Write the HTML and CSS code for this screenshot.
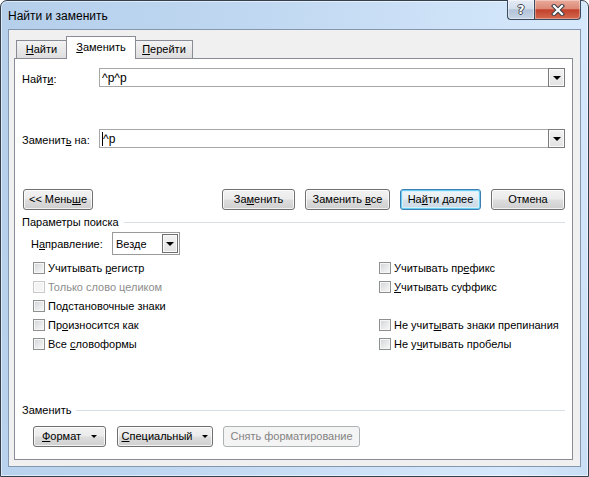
FILE: index.html
```html
<!DOCTYPE html>
<html lang="ru">
<head>
<meta charset="utf-8">
<title>Найти и заменить</title>
<link rel="stylesheet" href="styles.css">
</head>
<body>
<div class="window">
  <div class="titlebar">
    <span class="title">Найти и заменить</span>
    <div class="caption">
      <div class="cap help"><span class="qmark">?</span></div>
      <div class="cap close">
        <svg width="14" height="12" viewBox="0 0 14 12">
          <path d="M3 2 L11 10 M11 2 L3 10" stroke="#3a3f48" stroke-width="4.2" stroke-linecap="square"/>
          <path d="M3 2 L11 10 M11 2 L3 10" stroke="#ffffff" stroke-width="2.2" stroke-linecap="square"/>
        </svg>
      </div>
    </div>
  </div>
  <div class="client">
    <div class="tabs">
      <div class="tab t1"><span><u>Н</u>айти</span></div>
      <div class="tab t2 active"><span><u>З</u>аменить</span></div>
      <div class="tab t3"><span><u>П</u>ерейти</span></div>
    </div>
    <div class="pane">
      <div class="field-row">
        <span class="field-label">Найт<u>и</u>:</span>
        <div class="combo"><span class="combo-text">^p^p</span><span class="drop"><i class="tri"></i></span></div>
      </div>
      <div class="field-row replace-row">
        <span class="field-label">Заменит<u>ь</u> на:</span>
        <div class="combo"><span class="combo-text"><i class="caret"></i>^p</span><span class="drop"><i class="tri"></i></span></div>
      </div>
      <div class="btn-row">
        <div class="btn less"><span>&lt;&lt; Мень<u>ш</u>е</span></div>
        <div class="btn b-replace"><span>За<u>м</u>енить</span></div>
        <div class="btn b-all"><span>Заменить <u>в</u>се</span></div>
        <div class="btn b-next default"><span>На<u>й</u>ти далее</span></div>
        <div class="btn b-cancel"><span>Отмена</span></div>
      </div>
      <div class="group-head"><span>Параметры поиска</span><i class="rule"></i></div>
      <div class="dir-row">
        <span class="dir-label">Н<u>а</u>правление:</span>
        <div class="select"><span class="select-text">Везде</span><span class="drop sdrop"><i class="tri"></i></span></div>
      </div>
      <div class="checks">
        <div class="chk"><i class="box"></i><span>Учитывать <u>р</u>егистр</span></div>
        <div class="chk"><i class="box"></i><span>Учитывать пр<u>е</u>фикс</span></div>
        <div class="chk disabled"><i class="box"></i><span>Только слово целиком</span></div>
        <div class="chk"><i class="box"></i><span><u>У</u>читывать суффикс</span></div>
        <div class="chk"><i class="box"></i><span>Подстановочные знаки</span></div>
        <div class="chk empty"></div>
        <div class="chk"><i class="box"></i><span>Пр<u>о</u>износится как</span></div>
        <div class="chk"><i class="box"></i><span>Не учит<u>ы</u>вать знаки препинания</span></div>
        <div class="chk"><i class="box"></i><span>Все <u>с</u>ловоформы</span></div>
        <div class="chk"><i class="box"></i><span>Не у<u>ч</u>итывать пробелы</span></div>
      </div>
      <div class="group-head bottom-head"><span>Заменить</span><i class="rule"></i></div>
      <div class="bottom-row">
        <div class="btn b-format"><span><u>Ф</u>ормат</span><i class="tri"></i></div>
        <div class="btn b-special"><span><u>С</u>пециальный</span><i class="tri"></i></div>
        <div class="btn b-clear disabled"><span>Снять форматирование</span></div>
      </div>
    </div>
  </div>
</div>
</body>
</html>
```

FILE: styles.css
```css
* { box-sizing: border-box; }
html, body { margin: 0; padding: 0; }
body {
  width: 589px;
  height: 477px;
  overflow: hidden;
  background: #ffffff;
  font-family: "Liberation Sans", Arial, sans-serif;
  font-size: 11px;
  color: #000;
}
u { text-decoration: underline; text-underline-offset: 1px; }

.window {
  width: 589px;
  height: 477px;
  border: 1px solid #34404e;
  border-radius: 7px 7px 0 0;
  background: linear-gradient(100deg, #b5cfeb 0%, #c0d8f1 40%, #cfe3f8 70%, #d6e8fb 88%, #c9def4 100%);
  box-shadow: inset 0 0 0 1px rgba(255, 255, 255, 0.55);
  padding: 0 7px 9px 7px;
  display: flex;
  flex-direction: column;
}

.titlebar {
  height: 28px;
  flex: none;
  display: flex;
  justify-content: space-between;
  align-items: center;
}
.title { font-size: 12px; line-height: 16px; margin-top: 2px; }
.caption { display: flex; align-self: flex-start; height: 20px; margin-top: -1px; }
.cap {
  height: 20px;
  border: 1px solid #3b4a5e;
  border-top: none;
  display: flex;
  align-items: center;
  justify-content: center;
}
.cap.help {
  width: 27px;
  border-right: none;
  border-radius: 0 0 0 4px;
  background: linear-gradient(#e4ecf6 0%, #d3deeb 45%, #b3c4d9 52%, #c6d4e5 100%);
  box-shadow: inset 0 0 0 1px rgba(255, 255, 255, 0.45);
}
.cap.close {
  width: 47px;
  border-radius: 0 0 4px 0;
  background: linear-gradient(#eaa99a 0%, #dc8a77 45%, #c2412b 52%, #d4694f 100%);
  box-shadow: inset 0 0 0 1px rgba(255, 255, 255, 0.35);
}
.qmark {
  font-family: "DejaVu Sans", sans-serif;
  font-weight: bold;
  font-size: 12px;
  line-height: 12px;
  color: #fff;
  text-shadow: 1px 0 #3f4753, -1px 0 #3f4753, 0 1px #3f4753, 0 -1px #3f4753;
}

.client {
  flex: 1;
  border: 1px solid #8497af;
  background: #f0f0f0;
  padding: 6px 7px 6px 5px;
  display: flex;
  flex-direction: column;
}

.tabs {
  height: 22px;
  flex: none;
  display: flex;
  align-items: flex-end;
  padding-left: 2px;
}
.tab {
  height: 18px;
  border: 1px solid #898c95;
  border-bottom: none;
  background: linear-gradient(#f3f3f3, #e9e9e9 50%, #dedede);
  display: flex;
  align-items: center;
  justify-content: center;
  padding-bottom: 1px;
}
.t1 { width: 51px; }
.t2 { width: 70px; }
.t3 { width: 58px; }
.tab.active {
  height: 23px;
  margin: 0 -1px -1px -1px;
  background: #ffffff;
  position: relative;
  z-index: 1;
  padding-bottom: 2px;
}

.pane {
  flex: 1;
  border: 1px solid #898c95;
  background: #ffffff;
  padding: 9px 7px 0 7px;
  display: flex;
  flex-direction: column;
}

.field-row {
  height: 19px;
  flex: none;
  display: flex;
  align-items: center;
}
.replace-row { margin-top: 42px; }
.field-label { width: 77px; flex: none; padding-top: 2px; }
.combo {
  flex: 1;
  height: 19px;
  border: 1px solid #a7a7a7;
  display: flex;
  align-items: stretch;
}
.combo-text {
  flex: 1;
  padding-left: 2px;
  display: flex;
  align-items: center;
  font-size: 12px;
}
.caret {
  display: inline-block;
  width: 1px;
  height: 14px;
  background: #000;
}
.drop {
  width: 17px;
  margin: -1px -1px -1px 0;
  border: 1px solid #7b7b7b;
  background: linear-gradient(#f3f3f3, #e2e2e2);
  box-shadow: inset 0 0 0 1px #fafafa;
  display: flex;
  align-items: center;
  justify-content: center;
}
.tri {
  display: block;
  width: 0;
  height: 0;
  border-left: 4px solid transparent;
  border-right: 4px solid transparent;
  border-top: 4px solid #000;
  margin-top: 1px;
}

.btn-row {
  margin-top: 41px;
  height: 21px;
  flex: none;
  display: flex;
  gap: 10px;
}
.btn {
  height: 21px;
  flex: none;
  border: 1px solid #707070;
  border-radius: 3px;
  background: linear-gradient(#f2f2f2 0%, #ebebeb 48%, #dddddd 52%, #cfcfcf 100%);
  box-shadow: inset 0 0 0 1px rgba(255, 255, 255, 0.75);
  display: flex;
  align-items: center;
  justify-content: center;
  padding-bottom: 1px;
  white-space: pre;
}
.less { width: 70px; margin-left: 1px; margin-right: auto; }
.b-replace { width: 73px; }
.b-all { width: 85px; }
.b-next { width: 81px; }
.b-cancel { width: 74px; }
.btn.default {
  border-color: #3c7fb1;
  background: linear-gradient(#f0f5f8 0%, #e6eef3 48%, #d6e2ea 52%, #cbd9e3 100%);
  box-shadow: inset 0 0 0 1px #69cdf4, inset 0 0 0 2px #d7f0fb;
}
.btn.disabled {
  border-color: #adb2b5;
  background: #f4f4f4;
  box-shadow: none;
  color: #838383;
}

.group-head {
  margin-top: 6px;
  height: 13px;
  flex: none;
  display: flex;
  align-items: center;
}
.group-head span { line-height: 13px; }
.rule {
  flex: 1;
  height: 1px;
  background: #d5dfe5;
  margin-left: 5px;
  margin-top: -1px;
}

.dir-row {
  margin-top: 3px;
  height: 23px;
  flex: none;
  display: flex;
  align-items: center;
  padding-left: 9px;
}
.dir-label { width: 81px; flex: none; }
.select {
  width: 68px;
  height: 23px;
  border: 1px solid #9a9a9a;
  display: flex;
  align-items: stretch;
  background: #fff;
}
.select-text { flex: 1; padding-left: 3px; display: flex; align-items: center; }
.sdrop { width: 16px; margin: 1px 1px 1px 0; border-color: #6f6f6f; }

.checks {
  margin-top: 3px;
  flex: none;
  display: grid;
  grid-template-columns: 346px 1fr;
  grid-auto-rows: 19px;
  padding-left: 11px;
}
.chk {
  display: flex;
  align-items: center;
  gap: 3px;
}
.box {
  display: block;
  width: 12px;
  height: 12px;
  flex: none;
  border: 1px solid #8e8f8f;
  background: linear-gradient(135deg, #cfd2d6 0%, #e6e7e9 50%, #f8f8f8 100%);
  box-shadow: inset 0 0 0 1px #f6f6f6;
}
.chk.disabled { color: #8d8d8d; }
.chk.disabled .box {
  border-color: #c8c9c9;
  background: #f4f4f4;
  box-shadow: inset 0 0 0 1px #fbfbfb;
}

.bottom-head { margin-top: 51px; }
.bottom-row {
  margin-top: 9px;
  height: 21px;
  flex: none;
  display: flex;
  gap: 11px;
  padding-left: 11px;
}
.b-format, .b-special { gap: 10px; }
.b-format { width: 73px; }
.b-special { width: 96px; margin-right: -1px; }
.b-clear { width: 137px; }
.b-format .tri, .b-special .tri {
  border-left-width: 3px;
  border-right-width: 3px;
  border-top-width: 3px;
}
```
